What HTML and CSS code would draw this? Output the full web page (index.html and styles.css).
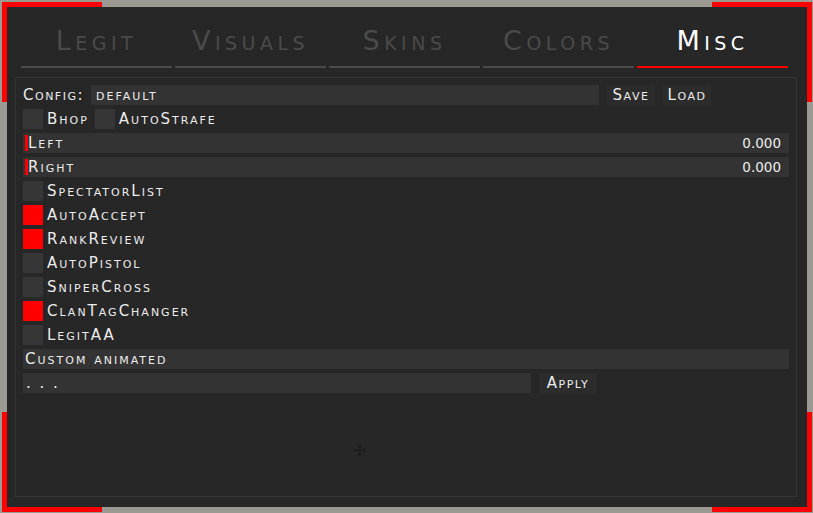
FILE: index.html
```html
<!DOCTYPE html>
<html lang="en">
<head>
    <meta charset="UTF-8">
    <meta name="viewport" content="width=device-width, initial-scale=1.0">
    <title>Misc</title>
    <link rel="stylesheet" href="styles.css">
</head>
<body>
    <div class="window">
        <span class="corner corner-tl"></span>
        <span class="corner corner-tr"></span>
        <span class="corner corner-bl"></span>
        <span class="corner corner-br"></span>

        <div class="tabs">
            <div class="tab">Legit</div>
            <div class="tab">Visuals</div>
            <div class="tab">Skins</div>
            <div class="tab">Colors</div>
            <div class="tab active">Misc</div>
        </div>

        <div class="panel">
            <div class="row">
                <span class="config-label">Config:</span>
                <div class="input config-input">default</div>
                <button class="btn">Save</button>
                <button class="btn">Load</button>
            </div>
            <div class="row">
                <div class="check"><span class="box"></span><span>Bhop</span></div>
                <div class="check"><span class="box"></span><span>AutoStrafe</span></div>
            </div>
            <div class="slider">
                <span class="slider-fill"></span>
                <span class="slider-label">Left</span>
                <span class="slider-value">0.000</span>
            </div>
            <div class="slider">
                <span class="slider-fill"></span>
                <span class="slider-label">Right</span>
                <span class="slider-value">0.000</span>
            </div>
            <div class="check"><span class="box"></span><span>SpectatorList</span></div>
            <div class="check"><span class="box on"></span><span>AutoAccept</span></div>
            <div class="check"><span class="box on"></span><span>RankReview</span></div>
            <div class="check"><span class="box"></span><span>AutoPistol</span></div>
            <div class="check"><span class="box"></span><span>SniperCross</span></div>
            <div class="check"><span class="box on"></span><span>ClanTagChanger</span></div>
            <div class="check"><span class="box"></span><span>LegitAA</span></div>
            <div class="combo">Custom animated</div>
            <div class="row">
                <div class="input tag-input">. . .</div>
                <button class="btn">Apply</button>
            </div>
        </div>

        <svg class="cursor" width="13" height="12" viewBox="0 0 13 12">
            <rect x="5" y="0" width="3" height="3" fill="#1c1c1c"/>
            <rect x="1" y="4" width="3" height="3" fill="#1c1c1c"/>
            <rect x="5" y="4" width="3" height="3" fill="#1c1c1c"/>
            <rect x="9" y="4" width="3" height="3" fill="#1c1c1c"/>
            <rect x="5" y="8" width="3" height="3" fill="#1c1c1c"/>
        </svg>
    </div>
</body>
</html>
```

FILE: styles.css
```css
body {
    margin: 0;
    padding: 7px;
    background-color: #9c9892;
    font-family: "DejaVu Sans", sans-serif;
    font-variant: small-caps;
    color: #ececec;
}
.window {
    position: relative;
    width: 800px;
    height: 500px;
    background-color: #272727;
}
.corner {
    position: absolute;
    width: 100px;
    height: 100px;
    box-sizing: border-box;
    border: 0 solid #ff0000;
    z-index: -1;
}
.corner-tl {
    top: -5px;
    left: -5px;
    border-top-width: 5px;
    border-left-width: 5px;
}
.corner-tr {
    top: -5px;
    right: -5px;
    border-top-width: 5px;
    border-right-width: 5px;
}
.corner-bl {
    bottom: -5px;
    left: -5px;
    border-bottom-width: 5px;
    border-left-width: 5px;
}
.corner-br {
    bottom: -5px;
    right: -5px;
    border-bottom-width: 5px;
    border-right-width: 5px;
}
.tabs {
    display: flex;
    gap: 3px;
    margin: 0 19px 0 14px;
}
.tab {
    flex: 1;
    height: 61px;
    box-sizing: border-box;
    padding-top: 20px;
    font-size: 27px;
    line-height: 27px;
    letter-spacing: 4.5px;
    text-align: center;
    color: #4a4a4a;
    border-bottom: 2px solid #4a4a4a;
}
.tab.active {
    color: #ffffff;
    border-bottom-color: #ff0000;
}
.panel {
    margin: 9px 10px 0 8px;
    height: 420px;
    box-sizing: border-box;
    border: 1px solid #353535;
    padding: 7px;
    display: flex;
    flex-direction: column;
    gap: 4px;
    font-size: 15px;
    letter-spacing: 2px;
}
.row {
    display: flex;
    align-items: center;
    height: 20px;
}
.config-label {
    width: 68px;
    letter-spacing: 1.5px;
}
.input {
    height: 20px;
    line-height: 20px;
    background-color: #333333;
    padding-left: 5px;
    box-sizing: border-box;
}
.config-input {
    width: 508px;
}
.tag-input {
    width: 508px;
    padding-left: 3px;
}
.btn {
    height: 20px;
    margin-left: 8px;
    padding: 0 2px;
    width: 48px;
    background-color: #2c2c2c;
    border: none;
    font: inherit;
    letter-spacing: 1.5px;
    color: inherit;
    line-height: 20px;
}
.tag-input + .btn {
    width: 58px;
}
.check {
    display: flex;
    align-items: center;
    height: 20px;
    margin-right: 6px;
}
.box {
    width: 20px;
    height: 20px;
    margin-right: 4px;
    background-color: #363636;
}
.box.on {
    background-color: #ff0000;
}
.slider {
    display: flex;
    align-items: center;
    height: 20px;
    background-color: #333333;
}
.slider-fill {
    width: 3px;
    height: 16px;
    margin-left: 2px;
    background-color: #ff0000;
}
.slider-label {
    flex: 1;
}
.slider-value {
    font-variant: normal;
    letter-spacing: 0;
    font-size: 13.5px;
    padding-right: 8px;
}
.combo {
    height: 20px;
    line-height: 20px;
    width: 766px;
    padding-left: 2px;
    box-sizing: border-box;
    background-color: #333333;
}
.cursor {
    position: absolute;
    left: 346px;
    top: 438px;
}
```
